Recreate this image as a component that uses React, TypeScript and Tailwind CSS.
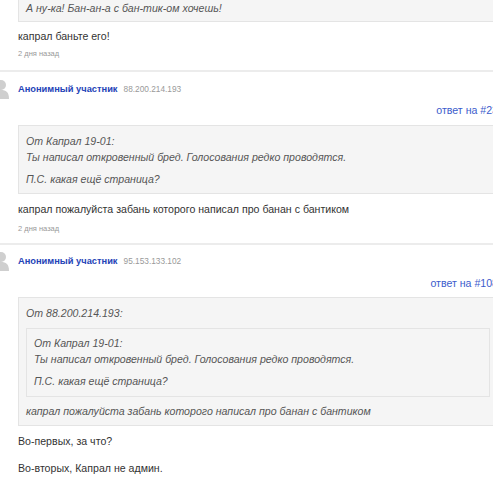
const font = { fontFamily: '"Liberation Sans", Arial, sans-serif' };

const Avatar = () => (
  <svg width="18" height="20" viewBox="0 0 18 20" className="block">
    <circle cx="1" cy="6" r="5" fill="#cfcfcf" />
    <path d="M-8 20 C-8 13 -4 11 1 11 C6 11 9 13 9 20 Z" fill="#cfcfcf" />
  </svg>
);

const Quote = ({ children, className = "" }: { children: React.ReactNode; className?: string }) => (
  <div className={`border border-[#e4e4e4] bg-[#f5f5f5] px-[7px] italic text-[#555] ${className}`}>{children}</div>
);

const Date = ({ className = "" }: { className?: string }) => (
  <div className={`text-[7.5px] leading-[12px] text-[#999] ${className}`}>2 дня назад</div>
);

const Header = ({ ip, reply, top, gap }: { ip: string; reply: string; top: string; gap: string }) => (
  <>
    <div className={`${top} grid grid-cols-[18px_1fr] items-center`}>
      <Avatar />
      <div className="flex items-baseline gap-[6px]">
        <span className="text-[9.3px] font-bold text-[#2443b7]">Анонимный участник</span>
        <span className="text-[8.3px] text-[#999]">{ip}</span>
      </div>
    </div>
    <div className={`${gap} pl-[18px] text-right text-[10.6px] leading-[16px] text-[#3b5ccc]`}>{reply}</div>
  </>
);

export default function App() {
  return (
    <div className="w-[493px] h-[480px] overflow-hidden bg-white text-[10.6px] leading-[16px] text-[#333]" style={font}>
      <div className="w-[498px]">
        {/* tail of previous comment */}
        <div className="pl-[18px] pb-[10px]">
          <Quote className="border-t-0 pb-[5px]">
            <p>А ну-ка! Бан-ан-а с бан-тик-ом хочешь!</p>
          </Quote>
          <p className="mt-[6px]">капрал баньте его!</p>
          <Date className="mt-[4px]" />
        </div>
        <div className="border-t-2 border-[#ececec]" />

        <div className="pb-[8px]">
          <Header ip="88.200.214.193" reply="ответ на #23" top="mt-[7px]" gap="mt-[3px]" />
          <div className="pl-[18px]">
            <Quote className="mt-[7px] pt-[7px] pb-[6px]">
              <p>
                От Капрал 19-01:
                <br />
                Ты написал откровенный бред. Голосования редко проводятся.
              </p>
              <p className="mt-[6px]">П.С. какая ещё страница?</p>
            </Quote>
            <p className="mt-[7px]">капрал пожалуйста забань которого написал про банан с бантиком</p>
            <Date className="mt-[6px]" />
          </div>
        </div>
        <div className="border-t-2 border-[#ececec]" />

        <div>
          <Header ip="95.153.133.102" reply="ответ на #108" top="mt-[6px]" gap="mt-[4px]" />
          <div className="pl-[18px]">
            <Quote className="mt-[6px] pt-[7px] pb-[6px]">
              <p>От 88.200.214.193:</p>
              <Quote className="mt-[7px] pt-[6px] pb-[7px]">
                <p>
                  От Капрал 19-01:
                  <br />
                  Ты написал откровенный бред. Голосования редко проводятся.
                </p>
                <p className="mt-[6px]">П.С. какая ещё страница?</p>
              </Quote>
              <p className="mt-[6px]">капрал пожалуйста забань которого написал про банан с бантиком</p>
            </Quote>
            <p className="mt-[7px]">Во-первых, за что?</p>
            <p className="mt-[11px]">Во-вторых, Капрал не админ.</p>
          </div>
        </div>
      </div>
    </div>
  );
}
